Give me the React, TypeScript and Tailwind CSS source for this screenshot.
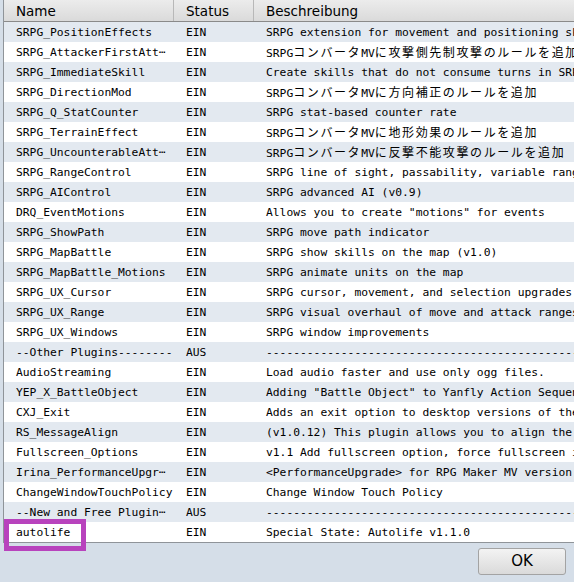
import React from "react";

type Plugin = {
  name: string;
  status: string;
  description: string;
};

const plugins: Plugin[] = [
  { name: "SRPG_PositionEffects", status: "EIN", description: "SRPG extension for movement and positioning skills" },
  { name: "SRPG_AttackerFirstAtt⋯", status: "EIN", description: "SRPGコンバータMVに攻撃側先制攻撃のルールを追加" },
  { name: "SRPG_ImmediateSkill", status: "EIN", description: "Create skills that do not consume turns in SRPG" },
  { name: "SRPG_DirectionMod", status: "EIN", description: "SRPGコンバータMVに方向補正のルールを追加" },
  { name: "SRPG_Q_StatCounter", status: "EIN", description: "SRPG stat-based counter rate" },
  { name: "SRPG_TerrainEffect", status: "EIN", description: "SRPGコンバータMVに地形効果のルールを追加" },
  { name: "SRPG_UncounterableAtt⋯", status: "EIN", description: "SRPGコンバータMVに反撃不能攻撃のルールを追加" },
  { name: "SRPG_RangeControl", status: "EIN", description: "SRPG line of sight, passability, variable range" },
  { name: "SRPG_AIControl", status: "EIN", description: "SRPG advanced AI (v0.9)" },
  { name: "DRQ_EventMotions", status: "EIN", description: 'Allows you to create "motions" for events' },
  { name: "SRPG_ShowPath", status: "EIN", description: "SRPG move path indicator" },
  { name: "SRPG_MapBattle", status: "EIN", description: "SRPG show skills on the map (v1.0)" },
  { name: "SRPG_MapBattle_Motions", status: "EIN", description: "SRPG animate units on the map" },
  { name: "SRPG_UX_Cursor", status: "EIN", description: "SRPG cursor, movement, and selection upgrades" },
  { name: "SRPG_UX_Range", status: "EIN", description: "SRPG visual overhaul of move and attack ranges" },
  { name: "SRPG_UX_Windows", status: "EIN", description: "SRPG window improvements" },
  { name: "--Other Plugins--------", status: "AUS", description: "-".repeat(60) },
  { name: "AudioStreaming", status: "EIN", description: "Load audio faster and use only ogg files." },
  { name: "YEP_X_BattleObject", status: "EIN", description: 'Adding "Battle Object" to Yanfly Action Sequence' },
  { name: "CXJ_Exit", status: "EIN", description: "Adds an exit option to desktop versions of the game" },
  { name: "RS_MessageAlign", status: "EIN", description: "(v1.0.12) This plugin allows you to align the text" },
  { name: "Fullscreen_Options", status: "EIN", description: "v1.1 Add fullscreen option, force fullscreen in game" },
  { name: "Irina_PerformanceUpgr⋯", status: "EIN", description: "<PerformanceUpgrade> for RPG Maker MV version 1.6" },
  { name: "ChangeWindowTouchPolicy", status: "EIN", description: "Change Window Touch Policy" },
  { name: "--New and Free Plugin⋯", status: "AUS", description: "-".repeat(60) },
  { name: "autolife", status: "EIN", description: "Special State: Autolife v1.1.0" },
];

// japanese runs are drawn double width, like the latin mono cells
const withCjk = (text: string) =>
  text.split(/([\u3000-\u9fff\uff00-\uffef]+)/).map((part, i) =>
    /[\u3000-\u9fff\uff00-\uffef]/.test(part) ? (
      <span
        key={i}
        className="font-['Noto_Sans_CJK_JP',sans-serif] text-[12px] tracking-[1.6px]"
      >
        {part}
      </span>
    ) : (
      <span key={i}>{part}</span>
    )
  );

const App = () => {
  return (
    <div className="w-[574px] h-[582px] bg-[#d5dee8] flex flex-col overflow-hidden relative">
      <div className="ml-[3px] h-[543px] border-l border-b border-[#8f9499] bg-white overflow-hidden">
        <div className="grid grid-cols-[170px_80px_1fr] h-[22px] bg-gradient-to-b from-[#ececec] to-[#dadada] border-b border-[#8a8a8a] font-['DejaVu_Sans',sans-serif] text-[13.5px] text-black">
          <div className="pl-3 pt-[1px] flex items-center border-r border-[#b8b8b8]">Name</div>
          <div className="pl-3 pt-[1px] flex items-center border-r border-[#b8b8b8]">Status</div>
          <div className="pl-3 pt-[1px] flex items-center">Beschreibung</div>
        </div>
        {plugins.map((p, i) => (
          <div
            key={p.name}
            className={`grid grid-cols-[170px_80px_1fr] h-[20px] pt-[2px] items-center whitespace-nowrap font-['DejaVu_Sans_Mono',monospace] text-[11.3px] text-black ${
              i % 2 === 0 ? "bg-[#e3e9f0]" : "bg-white"
            }`}
          >
            <div className="pl-3 overflow-hidden">{p.name}</div>
            <div className="pl-3 overflow-hidden">{p.status}</div>
            <div className="pl-3 overflow-hidden">{withCjk(p.description)}</div>
          </div>
        ))}
      </div>

      <div className="flex-1 flex justify-end items-start pt-[5px] pr-2">
        <button className="w-[88px] h-[27px] rounded-[3px] border border-[#a3a3a3] bg-gradient-to-b from-[#f3f3f3] to-[#dadada] font-['DejaVu_Sans',sans-serif] text-[15px] text-black">
          OK
        </button>
      </div>

      {/* marker around the autolife entry */}
      <div className="absolute left-[4px] top-[519px] w-[82px] h-[32px] border-[5px] border-[#b843bd]" />
    </div>
  );
};

export default App;
